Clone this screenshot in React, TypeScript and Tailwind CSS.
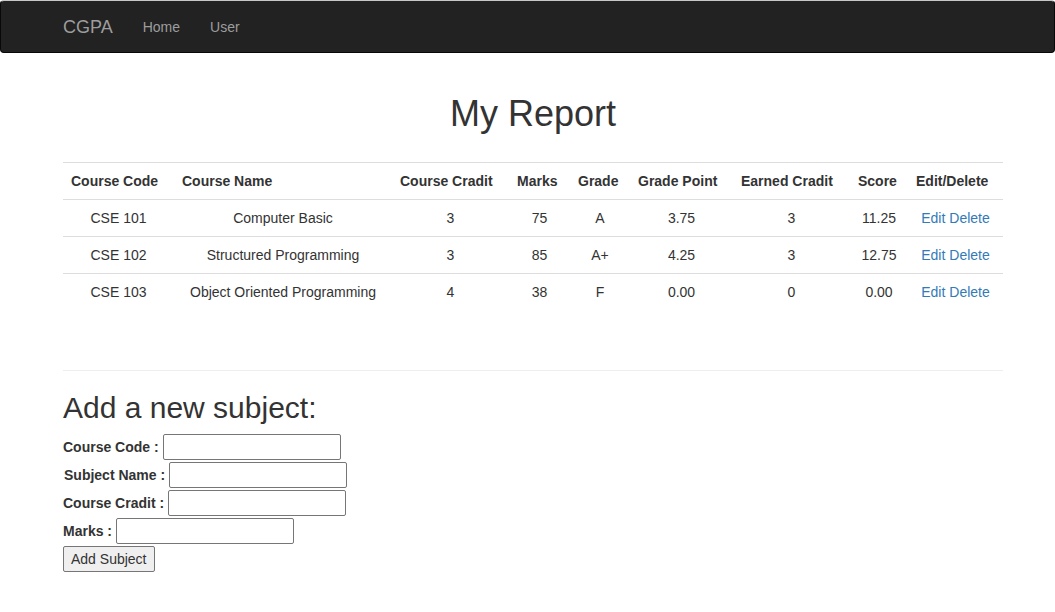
const rows = [
  { code: "CSE 101", name: "Computer Basic", credit: "3", marks: "75", grade: "A", point: "3.75", earned: "3", score: "11.25" },
  { code: "CSE 102", name: "Structured Programming", credit: "3", marks: "85", grade: "A+", point: "4.25", earned: "3", score: "12.75" },
  { code: "CSE 103", name: "Object Oriented Programming", credit: "4", marks: "38", grade: "F", point: "0.00", earned: "0", score: "0.00" },
];

const headers = ["Course Code", "Course Name", "Course Cradit", "Marks", "Grade", "Grade Point", "Earned Cradit", "Score", "Edit/Delete"];
const widths = [111, 218, 117, 61, 60, 103, 117, 58, 95];

function Field({ label, indent = false }: { label: string; indent?: boolean }) {
  return (
    <div className="flex items-center h-[28px]">
      <label className={`font-bold text-[14px] ${indent ? "ml-px" : ""}`}>{label}&nbsp;</label>
      <input
        type="text"
        className="w-[178px] h-[26px] border border-[#767676] rounded-[2px] bg-white px-[2px] outline-none"
      />
    </div>
  );
}

export default function App() {
  return (
    <div className="min-h-[612px] bg-white text-[#333] text-[14px] leading-[20px] font-['Liberation_Sans',Arial,sans-serif]">
      {/* navbar */}
      <nav className="h-[53px] pt-[1px] bg-[#222] border border-[#080808] border-t-[#c8c8c8] rounded-[4px] flex items-center">
        <div className="ml-[62px] flex items-center">
          <span className="text-[18px] text-[#9d9d9d]">CGPA</span>
          <a className="ml-[30px] text-[#9d9d9d]">Home</a>
          <a className="ml-[30px] text-[#9d9d9d]">User</a>
        </div>
      </nav>

      <div className="ml-[63px] w-[940px]">
        <h1 className="mt-[41px] text-[36px] leading-[40px] text-center">My Report</h1>

        <table className="mt-[28px] w-[940px] table-fixed border-collapse">
          <colgroup>
            {widths.map((w, i) => (
              <col key={i} style={{ width: w }} />
            ))}
          </colgroup>
          <thead>
            <tr className="border-t border-[#ddd]">
              {headers.map((h) => (
                <th key={h} className="p-[8px] text-left font-bold whitespace-nowrap border-b border-[#ddd]">
                  {h}
                </th>
              ))}
            </tr>
          </thead>
          <tbody>
            {rows.map((r) => (
              <tr key={r.code} className="border-b border-[#ddd] last:border-b-0 text-center">
                <td className="p-[8px]">{r.code}</td>
                <td className="p-[8px] whitespace-nowrap">{r.name}</td>
                <td className="p-[8px]">{r.credit}</td>
                <td className="p-[8px]">{r.marks}</td>
                <td className="p-[8px]">{r.grade}</td>
                <td className="p-[8px]">{r.point}</td>
                <td className="p-[8px]">{r.earned}</td>
                <td className="p-[8px]">{r.score}</td>
                <td className="p-[8px] whitespace-nowrap text-[#337ab7]">
                  <a>Edit</a> <a>Delete</a>
                </td>
              </tr>
            ))}
          </tbody>
        </table>

        <hr className="mt-[60px] border-0 border-t border-[#eee]" />

        <h2 className="mt-[20px] text-[30px] leading-[33px]">Add a new subject:</h2>
        <div className="mt-[9px] flex flex-col">
          <Field label="Course Code :" />
          <Field label="Subject Name :" indent />
          <Field label="Course Cradit :" />
          <Field label="Marks :" />
          <div className="h-[28px] flex items-center">
            <button className="h-[26px] px-[7px] border border-[#767676] rounded-[2px] bg-[#efefef] text-[14px]">
              Add Subject
            </button>
          </div>
        </div>
      </div>
    </div>
  );
}
